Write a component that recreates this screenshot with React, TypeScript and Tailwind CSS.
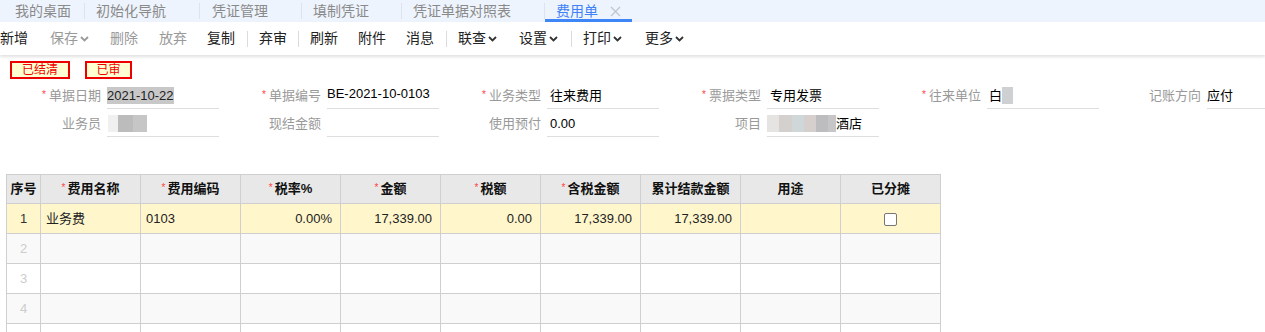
import React from "react";

const F = { fontFamily: '"Liberation Sans", Arial, "Noto Sans CJK SC", sans-serif' };

function Chevron({ color = "#333" }: { color?: string }) {
  return (
    <svg width="9" height="6" viewBox="0 0 9 6" className="ml-[2px] mt-[1px]">
      <path d="M1 1 L4.5 4.5 L8 1" fill="none" stroke={color} strokeWidth="1.8" />
    </svg>
  );
}

function Sep() {
  return <div className="w-px h-[16px] bg-[#dcdcdc] mx-[11px]" />;
}

const tabs = [
  { t: "我的桌面", w: 85, pl: 15 },
  { t: "初始化导航", w: 115, pl: 11 },
  { t: "凭证管理", w: 102, pl: 12 },
  { t: "填制凭证", w: 100, pl: 11 },
  { t: "凭证单据对照表", w: 143, pl: 11 },
];

type Tool = { t: string; gray?: boolean; chev?: boolean; sepAfter?: boolean; w: number };

const tools: Tool[] = [
  { t: "新增", w: 50 },
  { t: "保存", gray: true, chev: true, w: 60 },
  { t: "删除", gray: true, w: 49 },
  { t: "放弃", gray: true, w: 48 },
  { t: "复制", w: 29, sepAfter: true },
  { t: "弃审", w: 28, sepAfter: true },
  { t: "刷新", w: 48 },
  { t: "附件", w: 48 },
  { t: "消息", w: 29, sepAfter: true },
  { t: "联查", chev: true, w: 61 },
  { t: "设置", chev: true, w: 41, sepAfter: true },
  { t: "打印", chev: true, w: 62 },
  { t: "更多", chev: true, w: 60 },
];

function Field({
  label,
  req,
  children,
}: {
  label: string;
  req?: boolean;
  children?: React.ReactNode;
}) {
  return (
    <div className="flex w-[220px] shrink-0 items-center h-[26px]">
      <div className="w-[101px] shrink-0 flex justify-end items-center text-[13px] text-[#999]">
        {req && <span className="text-[#f44] text-[10px] mr-[3px] -mt-[3px]">*</span>}
        <span>{label}</span>
      </div>
      <div className="ml-[6px] w-[112px] shrink-0 h-[26px] border-b border-[#dedede] flex items-center text-[13px] text-black overflow-hidden whitespace-nowrap">
        {children}
      </div>
    </div>
  );
}

function Blur({ w, color }: { w: number; color: string }) {
  return <div className="h-[17px] blur-[0.6px]" style={{ width: w, background: color }} />;
}

const cols = [
  { h: "序号", w: 34 },
  { h: "费用名称", w: 100, req: true },
  { h: "费用编码", w: 100, req: true },
  { h: "税率%", w: 100, req: true },
  { h: "金额", w: 100, req: true },
  { h: "税额", w: 100, req: true },
  { h: "含税金额", w: 100, req: true },
  { h: "累计结款金额", w: 100 },
  { h: "用途", w: 100 },
  { h: "已分摊", w: 100 },
];

export default function App() {
  const rowBg = ["bg-[#fff6cc]", "bg-[#f9f9f9]", "bg-white", "bg-[#f9f9f9]", "bg-white"];
  return (
    <div className="w-[1265px] h-[332px] overflow-hidden bg-white" style={F}>
      {/* Tab bar */}
      <div className="h-[22px] bg-[#eef4fd] flex items-center text-[14px] text-[#8a8a8a]">
        <div className="flex items-center h-full">
          {tabs.map((t) => (
            <div key={t.t} className="h-full flex items-center shrink-0" style={{ width: t.w }}>
              <div className="flex-1 h-full flex items-center" style={{ paddingLeft: t.pl }}>
                {t.t}
              </div>
              <div className="w-px h-[16px] bg-[#dde3ec]" />
            </div>
          ))}
          <div className="h-full relative flex items-center w-[87px] pl-[11px] text-[#3f82f6]">
            <span>费用单</span>
            <svg width="11" height="11" viewBox="0 0 11 11" className="ml-[12px]">
              <path d="M1 1 L10 10 M10 1 L1 10" stroke="#c0c4cc" strokeWidth="1.3" />
            </svg>
            <div className="absolute left-0 right-0 bottom-0 h-[3px] bg-[#3f86f7]" />
          </div>
        </div>
      </div>

      {/* Toolbar */}
      <div className="h-[33px] bg-white flex items-center text-[14px] text-[#222] shadow-[0_2px_3px_rgba(0,0,0,0.12)] relative">
        {tools.map((tl) => (
          <React.Fragment key={tl.t}>
            <div className="flex items-center shrink-0" style={{ width: tl.w }}>
              <span className={tl.gray ? "text-[#999]" : "text-[#222]"}>{tl.t}</span>
              {tl.chev && <Chevron color={tl.gray ? "#999" : "#333"} />}
            </div>
            {tl.sepAfter && <Sep />}
          </React.Fragment>
        ))}
      </div>

      {/* Status tags */}
      <div className="flex pl-[10px] pt-[6px] gap-[15px]">
        <div className="h-[18px] w-[60px] border-2 border-[#e00] bg-[#ffffd2] text-[#e00] text-[12px] flex items-center justify-center">
          已结清
        </div>
        <div className="h-[18px] w-[47px] border-2 border-[#e00] bg-[#ffffd2] text-[#e00] text-[12px] flex items-center justify-center">
          已审
        </div>
      </div>

      {/* Form */}
      <div className="mt-[4px] flex flex-col gap-[2px]">
        <div className="flex">
          <Field label="单据日期" req>
            <span className="bg-[#c8c8c8] text-[#222] leading-[17px]">2021-10-22</span>
          </Field>
          <Field label="单据编号" req>
            <span className="-mt-[4px]">BE-2021-10-0103</span>
          </Field>
          <Field label="业务类型" req>
            <span className="ml-[3px]">往来费用</span>
          </Field>
          <Field label="票据类型" req>
            <span className="ml-[3px]">专用发票</span>
          </Field>
          <Field label="往来单位" req>
            <span className="ml-[2px]">白</span>
            <Blur w={11} color="#cfd0d2" />
          </Field>
          <Field label="记账方向">
            <span>应付</span>
          </Field>
        </div>
        <div className="flex">
          <Field label="业务员">
            <div className="flex items-center ml-[1px]">
              <Blur w={10} color="#f0f0f0" />
              <Blur w={15} color="#bcbcbc" />
              <Blur w={14} color="#c6c6c6" />
            </div>
          </Field>
          <Field label="现结金额" />
          <Field label="使用预付">
            <span className="ml-[3px]">0.00</span>
          </Field>
          <Field label="项目">
            <div className="flex items-center">
              <Blur w={12} color="#e6e3e3" />
              <Blur w={13} color="#d3d0ce" />
              <Blur w={12} color="#cfd7d8" />
              <Blur w={12} color="#d5d0ce" />
              <Blur w={12} color="#bdbcbf" />
              <Blur w={8} color="#c6c6c8" />
            </div>
            <span>酒店</span>
          </Field>
        </div>
      </div>

      {/* Table */}
      <div className="ml-[6px] mt-[37px] w-[935px] border-l border-t border-[#cfcfcf]">
        <div className="flex h-[29px] bg-[#e8e8e8] text-[13px] text-[#111] font-bold">
          {cols.map((c) => (
            <div
              key={c.h}
              className="border-r border-b border-[#cfcfcf] flex items-center justify-center shrink-0"
              style={{ width: c.w }}
            >
              {c.req && <span className="text-[#f44] text-[10px] font-normal mr-[2px] -mt-[3px]">*</span>}
              {c.h}
            </div>
          ))}
        </div>
        {rowBg.map((bg, r) => (
          <div key={r} className={`flex h-[30px] text-[13px] text-[#222] ${bg}`}>
            {cols.map((c, ci) => {
              let content: React.ReactNode = null;
              let align = "justify-end pr-[8px]";
              if (ci === 0) {
                align = "justify-center";
                content = r < 4 ? <span className={r === 0 ? "text-[#333]" : "text-[#ccc]"}>{r + 1}</span> : null;
              } else if (r === 0) {
                if (ci === 1) { content = "业务费"; align = "justify-start pl-[5px]"; }
                if (ci === 2) { content = "0103"; align = "justify-start pl-[5px]"; }
                if (ci === 3) content = "0.00%";
                if (ci === 4) content = "17,339.00";
                if (ci === 5) content = "0.00";
                if (ci === 6) content = "17,339.00";
                if (ci === 7) content = "17,339.00";
                if (ci === 9) {
                  align = "justify-center";
                  content = <div className="w-[13px] h-[13px] border border-[#767676] rounded-[2px] bg-white mt-[2px]" />;
                }
              }
              return (
                <div
                  key={ci}
                  className={`border-r border-b border-[#cfcfcf] flex items-center shrink-0 ${align}`}
                  style={{ width: c.w }}
                >
                  {content}
                </div>
              );
            })}
          </div>
        ))}
      </div>
    </div>
  );
}
